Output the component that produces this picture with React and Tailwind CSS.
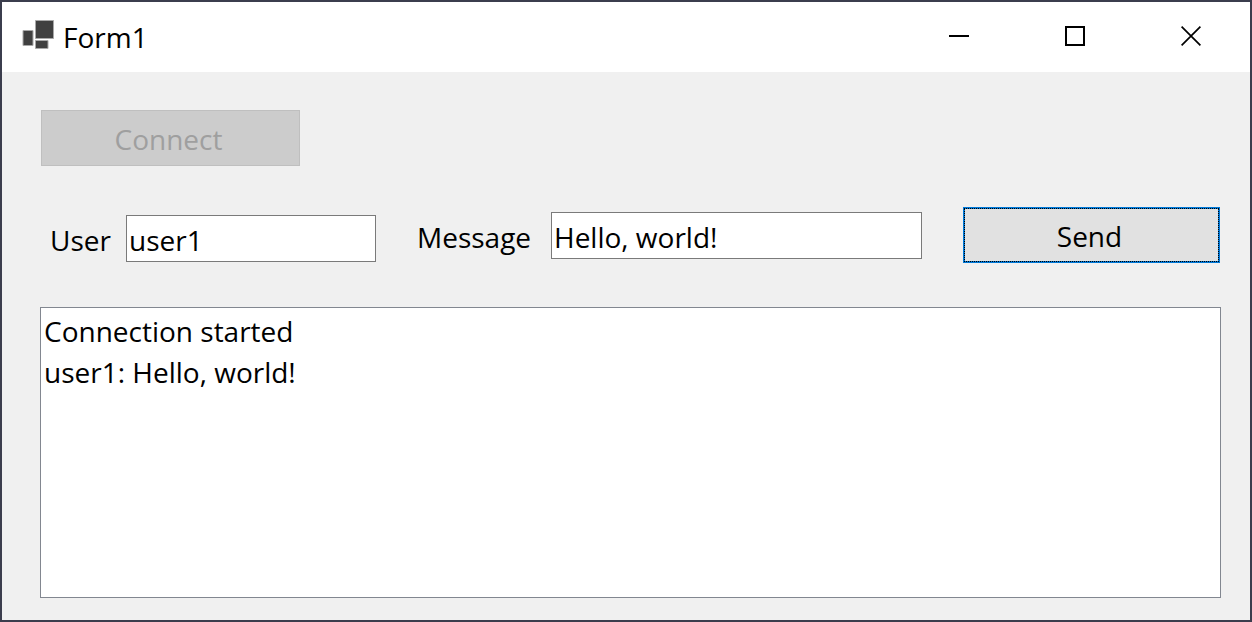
import { useState } from "react";

const captionButton = "flex w-[116px] items-center justify-center pb-0.5 hover:bg-[#e5e5e5]";
const textBox =
  "h-[47px] min-w-0 rounded-none border border-[#7a7a7a] bg-white px-0.5 pt-1 text-[28px] leading-10 outline-none";

function TitleBar() {
  return (
    <header className="flex h-[70px] shrink-0 bg-white pl-5">
      <div className="flex flex-1 items-center gap-2">
        <svg width="33" height="34" viewBox="0 0 33 34" className="mb-1" aria-hidden="true">
          <g fill="#404040" stroke="#a8a8a8" strokeWidth="1">
            <path d="M13.500 2.500h18v18h-18z" />
            <path d="M1 12.500h10v15H1z" />
            <path d="M13.500 22.500h12.500v8h-12.500z" />
          </g>
        </svg>
        <h1 className="text-[28px] leading-10">Form1</h1>
      </div>
      <div className="flex pr-px">
        <button type="button" aria-label="Minimize" className={captionButton}>
          <svg width="20" height="20" viewBox="0 0 20 20" aria-hidden="true">
            <path d="M0 9h20v2H0z" />
          </svg>
        </button>
        <button type="button" aria-label="Maximize" className={captionButton}>
          <svg width="20" height="20" viewBox="0 0 20 20" fill="none" stroke="#000" strokeWidth="2" aria-hidden="true">
            <path d="M1 1h18v18H1z" />
          </svg>
        </button>
        <button type="button" aria-label="Close" className={captionButton}>
          <svg width="20" height="20" viewBox="0 0 20 20" fill="none" stroke="#000" strokeWidth="1.7" aria-hidden="true">
            <path d="M.6.6l18.800 18.800M19.400.6L.6 19.400" />
          </svg>
        </button>
      </div>
    </header>
  );
}

export default function App() {
  const [user, setUser] = useState("user1");
  const [message, setMessage] = useState("Hello, world!");
  const [log, setLog] = useState(["Connection started", "user1: Hello, world!"]);

  const send = (e) => {
    e.preventDefault();
    setLog([...log, `${user}: ${message}`]);
  };

  return (
    <div className="flex min-h-screen flex-col border-2 border-[#3b3d4d] bg-[#f0f0f0] font-['Open_Sans','Noto_Sans',sans-serif] text-[28px] leading-10 text-black">
      <TitleBar />
      <main className="flex flex-1 flex-col pt-[38px] pr-[29px] pb-[22px] pl-[38px]">
        <button
          type="button"
          disabled
          className="ml-px h-14 w-[259px] border border-[#bfbfbf] bg-[#cccccc] pt-0.5 pr-1 text-[#9f9f9f]"
        >
          Connect
        </button>

        <form onSubmit={send} className="mt-[41px] mr-px flex items-center gap-[41px]">
          <div className="flex min-w-0 flex-[326_1_0%] items-center pt-1.5 pl-[10px]">
            <label htmlFor="user" className="w-[76px] shrink-0 pt-1">
              User
            </label>
            <input
              id="user"
              type="text"
              value={user}
              onChange={(e) => setUser(e.target.value)}
              className={`${textBox} flex-1`}
            />
          </div>
          <div className="flex min-w-0 flex-[505_1_0%] items-center">
            <label htmlFor="message" className="w-[134px] shrink-0 pt-1">
              Message
            </label>
            <input
              id="message"
              type="text"
              value={message}
              onChange={(e) => setMessage(e.target.value)}
              className={`${textBox} flex-1`}
            />
          </div>
          <button type="submit" className="flex h-14 w-[257px] shrink-0 border border-[#0078d7] bg-[#0078d7]">
            <span className="flex h-full flex-1 items-center justify-center border border-dotted border-black bg-[#e1e1e1] bg-clip-padding pt-0.5 pr-1">
              Send
            </span>
          </button>
        </form>

        <select
          size={4}
          aria-label="Messages"
          className="mt-11 flex-1 rounded-none border border-[#828790] bg-white px-px pt-1 outline-none"
        >
          {log.map((line, i) => (
            <option key={i} className="h-[41px] px-0.5 leading-10">
              {line}
            </option>
          ))}
        </select>
      </main>
    </div>
  );
}
